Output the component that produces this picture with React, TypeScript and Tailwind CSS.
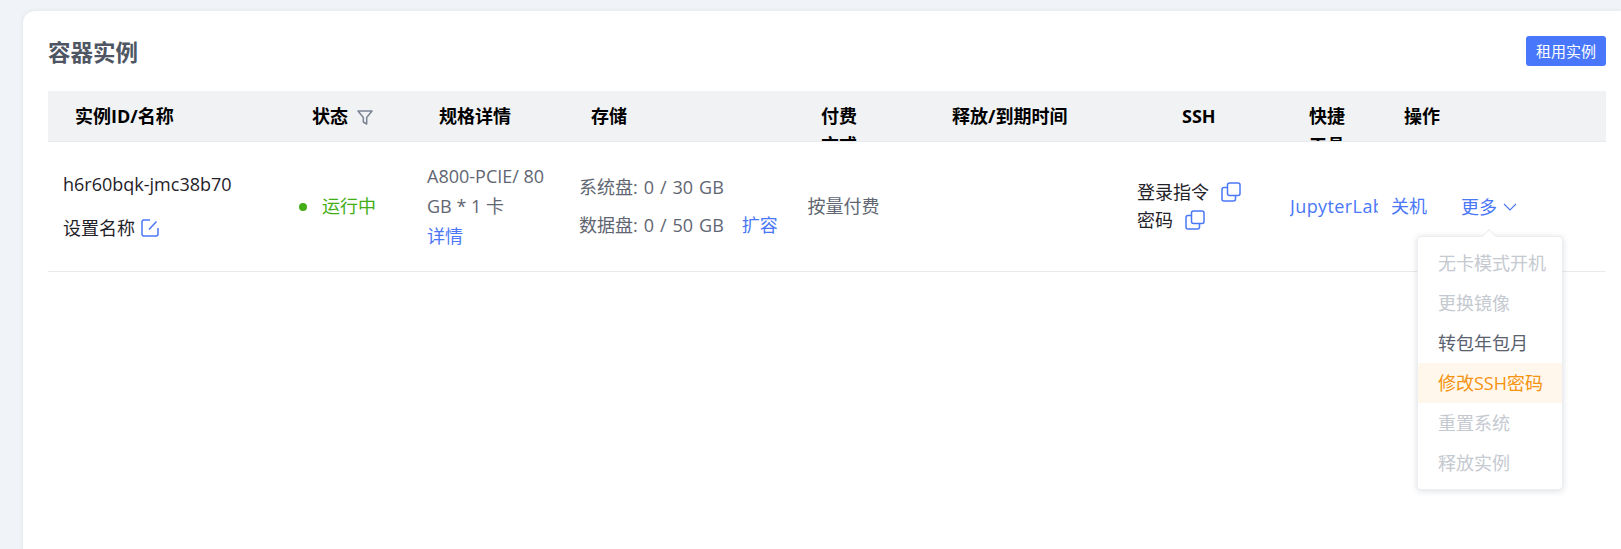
const FONT = "font-['Open_Sans','Noto_Sans_CJK_SC',sans-serif]"

function CopyIcon() {
  return (
    <svg viewBox="0 0 20 20" fill="none" stroke="#4a77f7" strokeWidth="1.5" className="h-5 w-5 shrink-0">
      <rect x="6.5" y="1" width="12.5" height="12.5" rx="2" />
      <path d="M6.5 5.500H3a2 2 0 0 0-2 2V17a2 2 0 0 0 2 2h9.500a2 2 0 0 0 2-2v-3.500" />
    </svg>
  )
}

function EditIcon() {
  return (
    <svg viewBox="0 0 18 18" fill="none" stroke="#4a77f7" strokeWidth="1.5" className="h-[18px] w-[18px] shrink-0">
      <path d="M9 1H3a2 2 0 0 0-2 2v12a2 2 0 0 0 2 2h12a2 2 0 0 0 2-2V9" />
      <path d="M8 10.500 15.500 2.500" />
    </svg>
  )
}

function FilterIcon() {
  return (
    <svg viewBox="0 0 16 16" fill="none" stroke="#7b8494" strokeWidth="1.500" className="h-4 w-4">
      <path d="M1 2h14L9.700 8.500V15L6.300 13V8.500Z" strokeLinejoin="round" />
    </svg>
  )
}

function ChevronIcon() {
  return (
    <svg viewBox="0 0 14 8" fill="none" stroke="#4a77f7" strokeWidth="1.100" className="h-2 w-3.5 shrink-0">
      <path d="M1 1l6 6 6-6" />
    </svg>
  )
}

const menuItems = [
  { label: '无卡模式开机', className: 'text-[#c5c9d0]' },
  { label: '更换镜像', className: 'text-[#c5c9d0]' },
  { label: '转包年包月', className: 'text-[#5a6270]' },
  { label: '修改SSH密码', className: 'bg-[#fff7eb] text-[#f5930f]' },
  { label: '重置系统', className: 'text-[#c5c9d0]' },
  { label: '释放实例', className: 'text-[#c5c9d0]' },
]

export default function App() {
  return (
    <div className={`h-[549px] overflow-hidden bg-[#f0f3f8] pl-[23px] pt-[11px] ${FONT}`}>
      <div className="h-[600px] rounded-tl-xl bg-white pl-[25px] pr-[15px] shadow-[0_0_5px_rgba(0,0,0,0.08)]">
        <div className="flex items-center justify-between py-[25px]">
          <h1 className="h-[30px] pt-0.5 text-[22.5px] font-bold leading-[30px] text-[#4f5663]">容器实例</h1>
          <button className="h-[30px] w-20 rounded-[3px] bg-[#4877fb] text-[15px] text-white">租用实例</button>
        </div>

        <div className="flex h-[51px] overflow-hidden border-b border-[#e8eaee] bg-[#f1f2f4] pt-[11px] text-[18px] font-bold leading-[29px] text-black">
          <div className="w-[264px] shrink-0 pl-[27px]">实例ID/名称</div>
          <div className="flex w-[127px] shrink-0 items-start gap-[9px]">
            <span>状态</span>
            <span className="pt-[7px]"><FilterIcon /></span>
          </div>
          <div className="w-[152px] shrink-0">规格详情</div>
          <div className="w-[230px] shrink-0">存储</div>
          <div className="w-[131px] shrink-0"><div className="w-[37px]">付费方式</div></div>
          <div className="w-[230px] shrink-0">释放/到期时间</div>
          <div className="w-[127px] shrink-0">SSH</div>
          <div className="w-[95px] shrink-0"><div className="w-[37px]">快捷工具</div></div>
          <div>操作</div>
        </div>

        <div className="flex h-[130px] items-center border-b border-[#e8eaee] text-[18px] text-[#5f6672]">
          <div className="-mt-0.5 w-[251px] shrink-0 pl-[15px] text-[#1f2229]">
            <div className="leading-6">h6r60bqk-jmc38b70</div>
            <div className="mt-5 flex items-center gap-1.5 leading-6">设置名称 <EditIcon /></div>
          </div>
          <div className="flex w-[128px] shrink-0 items-center text-[#43ad15]">
            <span className="h-2 w-2 rounded-full bg-[#43ad15]" />
            <span className="ml-[15px]">运行中</span>
          </div>
          <div className="-mt-0.5 w-[152px] shrink-0 leading-[30px]">
            <div className="w-[128px]">A800-PCIE/ 80 GB * 1 卡</div>
            <div className="text-[#4a77f7]">详情</div>
          </div>
          <div className="-mt-0.5 w-[228.5px] shrink-0 leading-6 [word-spacing:1.3px]">
            <div>系统盘: 0 / 30 GB</div>
            <div className="mt-3.5 flex gap-[18px]">
              <span>数据盘: 0 / 50 GB</span>
              <span className="text-[#4a77f7]">扩容</span>
            </div>
          </div>
          <div className="w-[329.5px] shrink-0">按量付费</div>
          <div className="-mt-0.5 w-[153px] shrink-0 leading-6 text-[#1f2229]">
            <div className="flex items-center gap-3">登录指令 <CopyIcon /></div>
            <div className="mt-1 flex items-center gap-3">密码 <CopyIcon /></div>
          </div>
          <div className="w-[101px] shrink-0 text-[#4a77f7]"><div className="w-[88px] overflow-hidden whitespace-nowrap tracking-[0.4px]">JupyterLab</div></div>
          <div className="w-[70px] shrink-0 text-[#4a77f7]">关机</div>
          <div className="relative flex items-center gap-1.5 leading-6 text-[#4a77f7]">
            更多 <ChevronIcon />
            <div className="absolute left-[-44px] top-[41px] w-[146px] rounded-[4px] border border-[#eceef2] bg-white py-1.5 shadow-[0_1px_6px_rgba(40,50,70,0.16)]">
              <div className="absolute left-[66px] top-[-6px] h-2.5 w-2.5 rotate-45 border-l border-t border-[#eceef2] bg-white" />
              {menuItems.map((item) => (
                <div key={item.label} className={`relative h-10 whitespace-nowrap pl-5 leading-10 ${item.className}`}>
                  {item.label}
                </div>
              ))}
            </div>
          </div>
        </div>
      </div>
    </div>
  )
}
